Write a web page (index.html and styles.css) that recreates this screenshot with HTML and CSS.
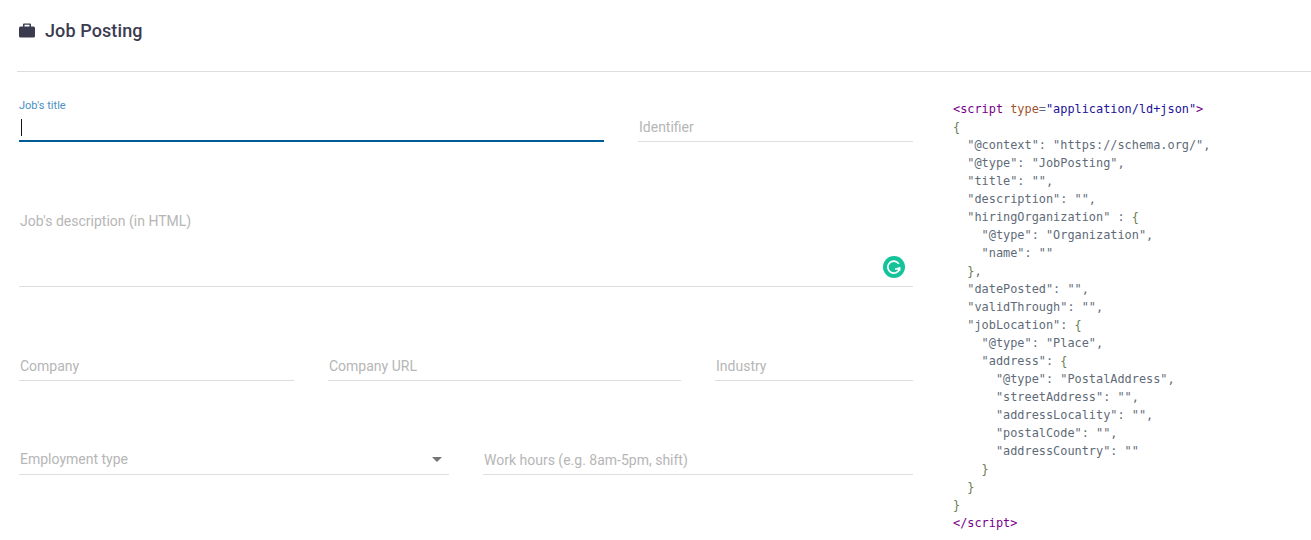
FILE: index.html
```html
<!DOCTYPE html>
<html lang="en">
<head>
<meta charset="utf-8">
<title>Job Posting</title>
<link rel="stylesheet" href="styles.css">
</head>
<body>
<header class="header">
  <svg class="case" viewBox="0 0 16 14" width="16" height="15"><path fill="#3b3b4f" d="M5 0h6a1 1 0 0 1 1 1v2h2.500A1.500 1.500 0 0 1 16 4.500v8a1.500 1.500 0 0 1-1.500 1.500h-13A1.500 1.500 0 0 1 0 12.500v-8A1.500 1.500 0 0 1 1.500 3H4V1a1 1 0 0 1 1-1zm.5 1.200V3h5V1.200z"/></svg>
  <h1 class="heading">Job Posting</h1>
</header>
<main class="main">
  <form class="form">
    <div class="row row-1">
      <div class="field field-focus grow-title">
        <span class="float">Job's title</span>
        <span class="caret"></span>
      </div>
      <div class="field grow-id"><span class="ph">Identifier</span></div>
    </div>
    <div class="row row-2">
      <div class="field field-area">
        <span class="ph">Job's description (in HTML)</span>
        <svg class="gram" viewBox="0 0 22 22" width="22" height="22"><circle cx="11" cy="11" r="11" fill="#15c39a"/><path fill="none" stroke="#fff" stroke-width="1.700" d="M15.800 7.800A6 6 0 1 0 16.500 13H12"/><path fill="#fff" d="M17.300 10.800v4.700l-3.700-3.400z"/></svg>
      </div>
    </div>
    <div class="row row-3">
      <div class="field grow-company"><span class="ph">Company</span></div>
      <div class="field grow-url"><span class="ph">Company URL</span></div>
      <div class="field grow-industry"><span class="ph">Industry</span></div>
    </div>
    <div class="row row-4">
      <div class="field grow-type"><span class="ph">Employment type</span><span class="arrow"></span></div>
      <div class="field grow-hours"><span class="ph">Work hours (e.g. 8am-5pm, shift)</span></div>
    </div>
  </form>
  <div class="code">
    <div class="line"><span class="t">&lt;script</span> <span class="a">type</span>=<span class="v">"application/ld+json"</span><span class="t">&gt;</span></div>
    <div class="line"><span class="p">{</span></div>
    <div class="line">  "@context": "https://schema.org/",</div>
    <div class="line">  "@type": "JobPosting",</div>
    <div class="line">  "title": "",</div>
    <div class="line">  "description": "",</div>
    <div class="line">  "hiringOrganization" : <span class="p">{</span></div>
    <div class="line">    "@type": "Organization",</div>
    <div class="line">    "name": ""</div>
    <div class="line">  <span class="p">}</span>,</div>
    <div class="line">  "datePosted": "",</div>
    <div class="line">  "validThrough": "",</div>
    <div class="line">  "jobLocation": <span class="p">{</span></div>
    <div class="line">    "@type": "Place",</div>
    <div class="line">    "address": <span class="p">{</span></div>
    <div class="line">      "@type": "PostalAddress",</div>
    <div class="line">      "streetAddress": "",</div>
    <div class="line">      "addressLocality": "",</div>
    <div class="line">      "postalCode": "",</div>
    <div class="line">      "addressCountry": ""</div>
    <div class="line">    <span class="p">}</span></div>
    <div class="line">  <span class="p">}</span></div>
    <div class="line"><span class="p">}</span></div>
    <div class="line"><span class="t">&lt;/script&gt;</span></div>
  </div>
</main>
</body>
</html>
```
FILE: styles.css
```css
html, body { margin: 0; padding: 0; background: #fff; }
body { width: 1311px; height: 540px; overflow: hidden; font-family: Roboto, sans-serif; }
.header { display: flex; align-items: center; gap: 10px; height: 72px; margin-left: 17px; padding: 0 0 9px 2px; box-sizing: border-box; border-bottom: 1px solid #ddd; }
.case { flex: none; margin-bottom: 2px; }
.heading { margin: 0; font-size: 18px; font-weight: 500; letter-spacing: 0.1px; color: #3b3b4f; line-height: 24px; }
.main { display: flex; padding-left: 19px; }
.form { width: 894px; flex: none; display: flex; flex-direction: column; }
.row { display: flex; gap: 34px; }
.row-1 { margin-top: 22px; }
.row-2 { margin-top: 59px; }
.row-3 { margin-top: 59px; }
.row-4 { margin-top: 59px; }
.field { position: relative; box-sizing: border-box; height: 35px; padding-top: 5px; border-bottom: 1px solid #ddd; display: flex; align-items: center; }
.ph { font-size: 14px; color: #b6b6b6; padding-left: 1px; }
.grow-title { width: 585px; height: 48px; padding-top: 0; border-bottom: 2px solid #005a96; }
.grow-id { width: 275px; margin-top: 13px; }
.field-area { width: 894px; height: 86px; align-items: flex-start; padding-top: 12px; }
.grow-company { width: 275px; }
.grow-url { width: 353px; }
.grow-industry { width: 198px; }
.grow-type { width: 430px; padding-top: 3px; }
.grow-hours { width: 430px; }
.float { position: absolute; left: 0; top: 5px; font-size: 11px; color: #4a8fc5; }
.caret { position: absolute; left: 2px; top: 25px; width: 1px; height: 17px; background: #111; }
.gram { position: absolute; right: 8px; top: 55px; }
.arrow { position: absolute; right: 7px; top: 17px; width: 0; height: 0; border-left: 5px solid transparent; border-right: 5px solid transparent; border-top: 5px solid #757575; }
.code { margin: 28px 0 0 40px; font-family: "DejaVu Sans Mono", monospace; font-size: 11.880px; line-height: 18px; color: #5f6b78; }
.line { height: 18px; white-space: pre; }
.t { color: #708; }
.a { color: #a0522d; }
.v { color: #219; }
.p { color: #6b7d4f; }
```
